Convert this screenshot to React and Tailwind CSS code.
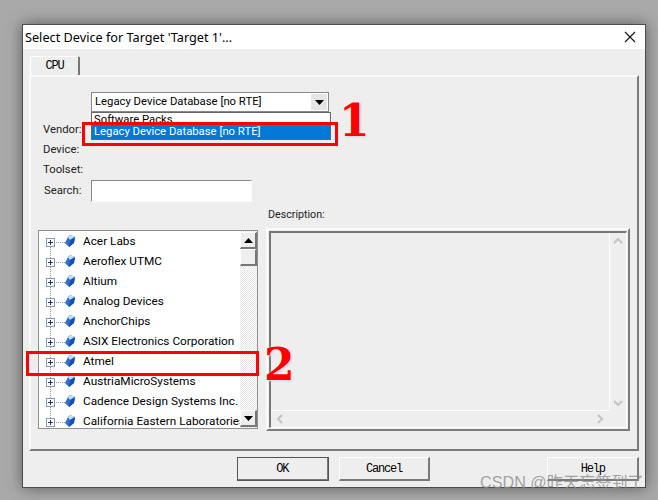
import React from 'react';

const vendors = [
  'Acer Labs',
  'Aeroflex UTMC',
  'Altium',
  'Analog Devices',
  'AnchorChips',
  'ASIX Electronics Corporation',
  'Atmel',
  'AustriaMicroSystems',
  'Cadence Design Systems Inc.',
  'California Eastern Laboratories',
];

const ArrowDown = () => (
  <svg width="9" height="5" viewBox="0 0 9 5"><path d="M0 0h9L4.5 5z" fill="#000" /></svg>
);
const ArrowUp = () => (
  <svg width="9" height="5" viewBox="0 0 9 5"><path d="M0 5h9L4.5 0z" fill="#000" /></svg>
);
const Chevron = ({ d }) => (
  <svg width="10" height="10" viewBox="0 0 10 10" fill="none"><path d={d} stroke="#c4c4c4" strokeWidth="2" /></svg>
);

const Gem = () => (
  <svg width="10" height="12" viewBox="0 0 10 12" className="block shrink-0">
    <path d="M5 0l5 2-1 6-5 4-4-4 3-6z" fill="#2f6fd0" />
    <path d="M5 0l5 2-5 3-2-3z" fill="#bfe0fb" />
    <path d="M5 5l5-3-1 6-5 4z" fill="#1a4fae" />
  </svg>
);

const TreeRow = ({ name, first }) => (
  <div className="relative flex h-[20px] items-center pl-[7px] whitespace-nowrap">
    {!first && <span className="absolute left-[11px] top-[-6px] h-[12px] border-l border-dotted border-[#999]" />}
    <span className="relative flex h-[9px] w-[9px] shrink-0 items-center justify-center border border-[#8a9ab0] bg-white">
      <span className="absolute h-px w-[5px] bg-[#23346e]" />
      <span className="absolute h-[5px] w-px bg-[#23346e]" />
    </span>
    <span className="ml-px w-[9px] shrink-0 border-t border-dotted border-[#999]" />
    <span className="mb-[3px] shrink-0"><Gem /></span>
    <span className="ml-[8px] shrink-0 text-[11.8px] leading-none text-black">{name}</span>
  </div>
);

const DialogButton = ({ label, isDefault, className }) => (
  <button
    className={`flex h-[24px] w-[92px] items-center justify-center bg-[#eee] font-['Liberation_Mono',monospace] text-[12px] tracking-[-1.2px] text-black border-t border-l border-t-white border-l-white border-r-2 border-b-2 border-r-[#7a7a7a] border-b-[#7a7a7a] ${isDefault ? 'outline outline-[#555] -outline-offset-1' : ''} ${className || ''}`}
  >
    {label}
  </button>
);

const App = () => {
  return (
    <div className="relative h-[500px] w-[658px] overflow-hidden bg-[#a9a9a9] pl-[22px] pt-[24px] font-['Roboto',sans-serif]">
      <div className="flex h-[464px] w-[624px] flex-col border border-[#4d4d4d] bg-[#eee] shadow-[0_0_14px_rgba(0,0,0,0.45)]">
        {/* title bar */}
        <div className="flex h-[24px] shrink-0 items-center justify-between bg-white pl-[2px] pr-[9px]">
          <span className="font-['Noto_Sans',sans-serif] text-[12.7px] leading-none text-black">Select Device for Target 'Target 1'...</span>
          <svg width="12" height="12" viewBox="0 0 12 12"><path d="M1 1l10 10M11 1L1 11" stroke="#111" strokeWidth="1.1" /></svg>
        </div>

        <div className="flex flex-1 flex-col px-[6px] pt-[7px]">
          {/* tab */}
          <div className="ml-[1px] flex h-[19px] w-[50px] items-center justify-center rounded-t-[2px] border-t border-l border-t-white border-l-white border-r-2 border-r-[#777] font-['Liberation_Mono',monospace] text-[12px] tracking-[-1.2px] text-black">
            CPU
          </div>

          {/* panel */}
          <div className="relative flex h-[376px] w-[610px] flex-col border-t-2 border-l-2 border-t-[#fafafa] border-l-[#fafafa] border-r-2 border-b-2 border-r-[#7c7c7c] border-b-[#7c7c7c] pl-[12px] pt-[15px] text-[11.3px] text-[#222]">
            {/* combo */}
            <div className="ml-[48px] flex h-[20px] w-[238px] items-center justify-between border border-[#8a8a8a] bg-white pl-[3px] pr-px">
              <span className="leading-none text-black">Legacy Device Database [no RTE]</span>
              <span className="flex h-[16px] w-[16px] items-center justify-center bg-[#e6e6e6]"><ArrowDown /></span>
            </div>

            <div className="mt-[8px] flex h-[20px] items-center">Vendor:</div>
            <div className="flex h-[20px] items-center">Device:</div>
            <div className="flex h-[20px] items-center">Toolset:</div>
            <div className="flex h-[22px] items-center">
              <span className="w-[48px] pl-px">Search:</span>
              <div className="h-[22px] w-[161px] border border-[#8a8a8a] border-r-[#fafafa] border-b-[#fafafa] bg-white" />
            </div>
            <div className="ml-[225px] mt-[4px] h-[18px] text-[10.7px] leading-[18px]">Description:</div>

            {/* tree + description */}
            <div className="mt-[6px] flex items-start">
              <div className="-ml-[5px] flex h-[199px] w-[220px] overflow-hidden border border-[#8f8f8f] bg-white">
                <div className="w-[201px] shrink-0 overflow-hidden pt-px">
                  {vendors.map((name, i) => (
                    <TreeRow key={name} name={name} first={i === 0} />
                  ))}
                </div>
                <div className="flex w-[17px] shrink-0 flex-col bg-[repeating-conic-gradient(#e4e4e4_0_25%,#fff_0_50%)] bg-[length:2px_2px] py-px">
                  <div className="flex h-[17px] items-center justify-center border-t border-l border-t-white border-l-white border-r-2 border-b-2 border-r-[#777] border-b-[#777] bg-[#eee]"><ArrowUp /></div>
                  <div className="h-[17px] border-t border-l border-t-white border-l-white border-r-2 border-b-2 border-r-[#777] border-b-[#777] bg-[#eee]" />
                  <div className="flex-1" />
                  <div className="flex h-[17px] items-center justify-center border-t border-l border-t-white border-l-white border-r-2 border-b-2 border-r-[#777] border-b-[#777] bg-[#eee]"><ArrowDown /></div>
                </div>
              </div>

              <div className="-mt-[2px] ml-[8px] flex h-[203px] w-[364px] flex-col border-t-2 border-l-2 border-t-[#fafafa] border-l-[#fafafa] border-r-2 border-b-2 border-r-[#7c7c7c] border-b-[#7c7c7c] p-px">
                <div className="flex h-full flex-col border-t-2 border-l-2 border-t-[#777] border-l-[#777] border-r border-b border-r-white border-b-white">
                  <div className="flex flex-1">
                    <div className="flex-1 border-r border-b border-white" />
                    <div className="flex w-[16px] flex-col items-center justify-between py-[3px]">
                      <Chevron d="M1 7l4-4 4 4" />
                      <Chevron d="M1 3l4 4 4-4" />
                    </div>
                  </div>
                  <div className="flex h-[16px] items-center justify-between pl-[4px] pr-[21px]">
                    <Chevron d="M7 1L3 5l4 4" />
                    <Chevron d="M3 1l4 4-4 4" />
                  </div>
                </div>
              </div>
            </div>
          </div>

          {/* buttons */}
          <div className="mt-[6px] flex">
            <DialogButton label="OK" isDefault className="ml-[208px]" />
            <DialogButton label="Cancel" className="ml-[10px]" />
            <DialogButton label="Help" className="ml-[117px]" />
          </div>
        </div>
      </div>

      {/* open dropdown */}
      <div className="absolute left-[91px] top-[112px] h-[28px] w-[240px] overflow-hidden border border-[#666] bg-white text-[11.3px] leading-none">
        <div className="h-[12px] pl-[2px] pt-px text-black">Software Packs</div>
        <div className="flex h-[14px] items-center bg-[#0078d7] pl-[2px] text-white">Legacy Device Database [no RTE]</div>
      </div>

      {/* annotations */}
      <div className="absolute left-[82px] top-[122px] h-[24px] w-[256px] border-[3px] border-[#f00]" />
      <div className="absolute left-[26px] top-[351px] h-[25px] w-[233px] border-[3px] border-[#f00]" />
      <div className="absolute left-[339px] top-[99px] font-['DejaVu_Serif',serif] text-[44px] font-bold leading-none text-[#f00] [text-shadow:0_0_2px_#fff,1px_1px_2px_#ccc]">1</div>
      <div className="absolute left-[264px] top-[343px] font-['DejaVu_Serif',serif] text-[44px] font-bold leading-none text-[#f00] [text-shadow:0_0_2px_#fff,1px_1px_2px_#ccc]">2</div>

      {/* watermark */}
      <div className="absolute left-[480px] top-[472px] whitespace-nowrap font-['Liberation_Sans','Noto_Sans_CJK_SC',sans-serif] text-[16.2px] leading-[20px] text-[#8c8c8c]/80">CSDN @昨天忘签到了</div>
    </div>
  );
};

export default App;
